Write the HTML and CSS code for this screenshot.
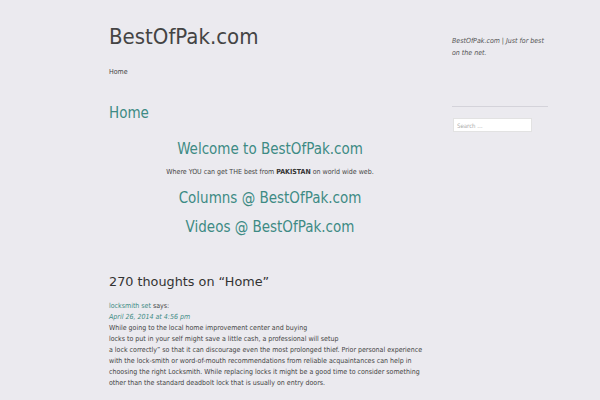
FILE: index.html
```html
<!DOCTYPE html>
<html>
<head>
<meta charset="utf-8">
<link rel="stylesheet" href="styles.css">
</head>
<body>
<div class="page">
  <main class="content">
    <header class="site-header">
      <div class="site-title">BestOfPak.com</div>
      <nav class="nav"><a href="#">Home</a></nav>
    </header>
    <article class="entry">
      <h1 class="entry-title">Home</h1>
      <h2 class="big">Welcome to BestOfPak.com</h2>
      <p class="lead">Where YOU can get THE best from <b>PAKISTAN</b> on world wide web.</p>
      <h2 class="big cols">Columns @ BestOfPak.com</h2>
      <h2 class="big vids">Videos @ BestOfPak.com</h2>
    </article>
    <section class="comments">
      <h3 class="comments-title">270 thoughts on “Home”</h3>
      <div class="comment">
        <div class="author"><a href="#">locksmith set</a> says:</div>
        <div class="date"><a href="#">April 26, 2014 at 4:56 pm</a></div>
        <p class="body">While going to the local home improvement center and buying<br>locks to put in your self might save a little cash, a professional will setup<br>a lock correctly” so that it can discourage even the most prolonged thief. Prior personal experience with the lock-smith or word-of-mouth recommendations from reliable acquaintances can help in choosing the right Locksmith. While replacing locks it might be a good time to consider something other than the standard deadbolt lock that is usually on entry doors.</p>
      </div>
    </section>
  </main>
  <aside class="sidebar">
    <p class="tagline">BestOfPak.com | Just for best on the net.</p>
    <hr class="rule">
    <input class="search" type="text" placeholder="Search …">
  </aside>
</div>
</body>
</html>
```
FILE: styles.css
```css
html, body { margin: 0; padding: 0; }
body {
  background: #ebeaef;
  font-family: "DejaVu Sans Condensed", "DejaVu Sans", sans-serif;
  color: #444;
  width: 600px;
  height: 400px;
  overflow: hidden;
}
a { color: #3d8a84; text-decoration: none; }
.page {
  display: flex;
  padding-left: 109px;
}
.content { width: 322px; }
.site-header { padding-top: 24px; }
.site-title {
  font-size: 22px;
  color: #444;
  line-height: 26px;
}
.nav { margin-top: 17px; font-size: 7px; line-height: 10px; }
.nav a { color: #444; }
.entry-title {
  font-weight: normal;
  font-size: 15px;
  color: #3d8a84;
  margin: 26px 0 0;
  line-height: 20px;
}
.big {
  font-weight: normal;
  font-size: 15px;
  color: #3d8a84;
  text-align: center;
  margin: 0;
  line-height: 20px;
}
.entry-title + .big { margin-top: 16px; }
.lead { font-size: 7px; text-align: center; margin: 8px 0 0; line-height: 10px; }
.lead b { color: #333; }
.cols { margin-top: 11px; }
.vids { margin-top: 9px; }
.comments-title {
  font-family: "DejaVu Sans", sans-serif;
  font-weight: normal;
  font-size: 12.8px;
  color: #333;
  margin: 36px 0 0;
  line-height: 17px;
}
.comment { margin-top: 11px; font-size: 7px; line-height: 11px; }
.date a { font-style: italic; }
.body { margin: 0; }
.sidebar { margin-left: 21px; width: 96px; padding-top: 35px; }
.tagline {
  font-size: 7px;
  font-style: italic;
  line-height: 12px;
  margin: 0;
  color: #555;
}
.rule { border: 0; border-top: 1px solid #d4d3da; margin: 47px 0 0; }
.search {
  display: block;
  margin: 11px 0 0 1px;
  width: 79px;
  height: 14px;
  box-sizing: border-box;
  border: 1px solid #e2e2e2;
  background: #fff;
  font-size: 6px;
  padding: 0 3px;
  font-family: "DejaVu Sans Condensed", sans-serif;
}
.search::placeholder { color: #aaa; }
```
